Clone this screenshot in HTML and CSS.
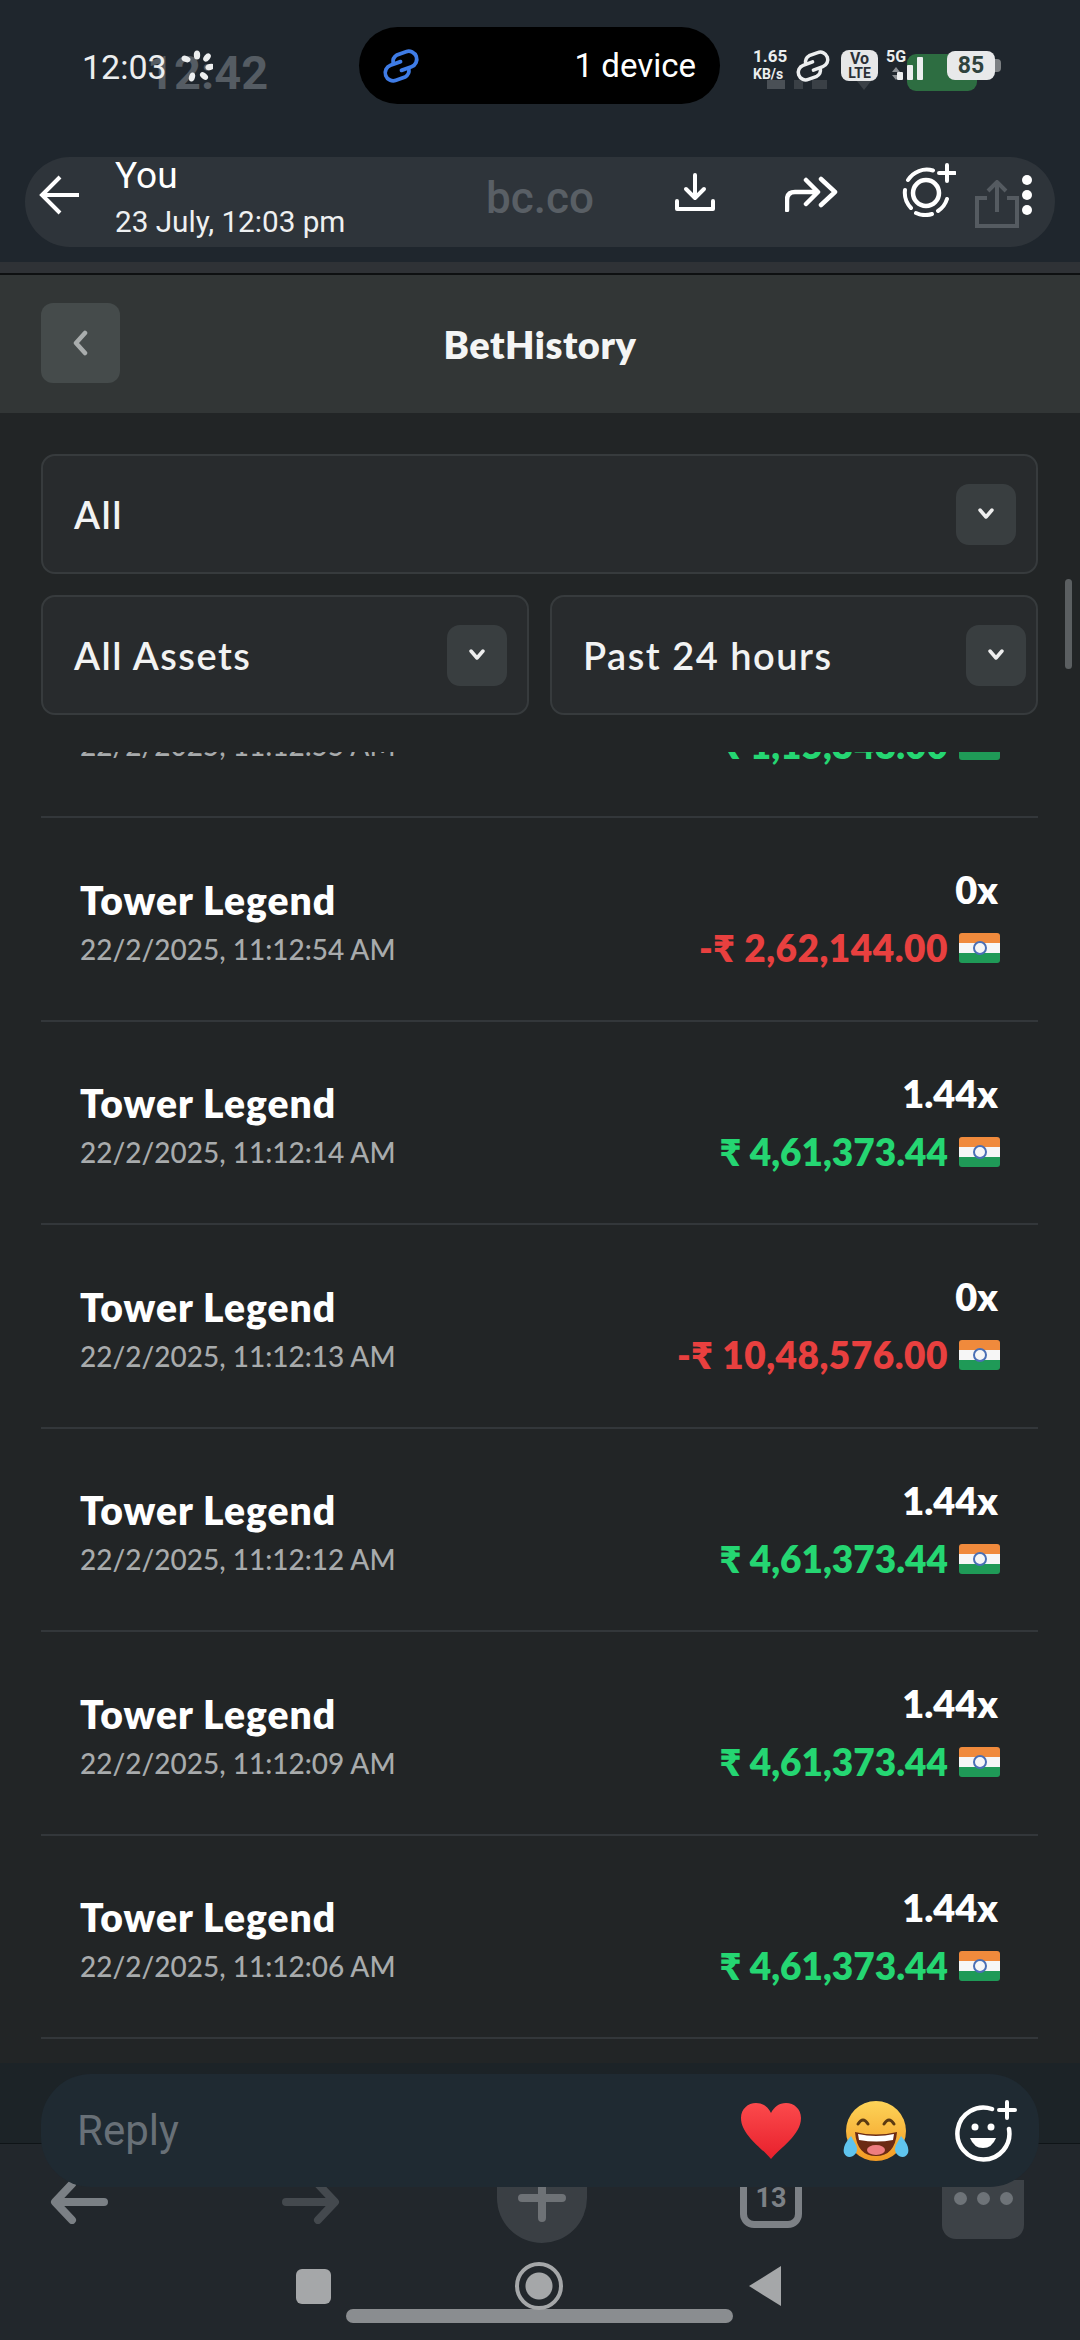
FILE: index.html
```html
<!DOCTYPE html>
<html>
<head>
  <meta charset="UTF-8">
  <title>BetHistory</title>
  <link rel="stylesheet" href="styles.css">
</head>
<body>
<div class="phone">

  <!-- Status bar + story header -->
  <div class="top">
    <div class="ghost-status">
      <span class="ghost-clock">12:42</span>
      <span class="ghost-bars"></span>
      <svg class="ghost-wifi" width="30" height="14" viewBox="0 0 30 14"><path d="M4 0h22L15 14z" fill="#3a4046"/></svg>
      <span class="ghost-batt"></span>
    </div>
    <div class="status">
      <div class="status-left">
        <span class="clock">12:03</span>
        <svg class="spinner" width="32" height="32" viewBox="0 0 32 32" fill="#eceeef">
          <ellipse cx="16" cy="5" rx="3.2" ry="4.6"/>
          <ellipse cx="26" cy="7.500" rx="3" ry="4.600" transform="rotate(40 26 7.500)"/>
          <ellipse cx="29" cy="17" rx="3" ry="4.600" transform="rotate(75 29 17)"/>
          <ellipse cx="23" cy="26" rx="3" ry="4.600" transform="rotate(-50 23 26)"/>
          <ellipse cx="11" cy="27" rx="3" ry="4.600" transform="rotate(15 11 27)"/>
          <ellipse cx="5" cy="9" rx="3" ry="4.600" transform="rotate(-70 5 9)"/>
        </svg>
      </div>
      <div class="island">
        <svg class="link" width="42" height="32" viewBox="0 0 36 30" fill="none" stroke="#3f7ce6" stroke-width="3.500" stroke-linecap="round">
          <g transform="rotate(-20 18 15)">
            <path d="M12 10a7.500 7.500 0 0 1 6-6h9a7.500 7.500 0 0 1 0 15H17"/>
            <path d="M24 20a7.500 7.500 0 0 1-6 6H9a7.500 7.500 0 0 1 0-15h10"/>
          </g>
        </svg>
        <span>1 device</span>
      </div>
      <div class="status-right">
        <div class="speed"><b>1.65</b><i>KB/s</i></div>
        <svg class="link" width="36" height="30" viewBox="0 0 36 30" fill="none" stroke="#eceeef" stroke-width="3.500" stroke-linecap="round">
          <g transform="rotate(-20 18 15)">
            <path d="M12 10a7.500 7.500 0 0 1 6-6h9a7.500 7.500 0 0 1 0 15H17"/>
            <path d="M24 20a7.500 7.500 0 0 1-6 6H9a7.500 7.500 0 0 1 0-15h10"/>
          </g>
        </svg>
        <div class="volte"><span>Vo</span><span class="lte">LTE</span></div>
        <div class="signal">
          <div class="five-g"><b>5G</b><svg width="10" height="13" viewBox="0 0 10 13" fill="#8b8f93"><path d="M5 0l4 5H1zM5 13L1 8h8z"/></svg></div>
          <div class="bars"><i class="b1"></i><i class="b2"></i><i class="b3"></i></div>
        </div>
        <div class="battery">85</div>
      </div>
    </div>

    <div class="story-bar">
      <svg class="story-back" width="42" height="40" viewBox="0 0 42 40" fill="none" stroke="#fff" stroke-width="4"><path d="M40 20H3M21 2L3 20l18 18"/></svg>
      <div class="story-who">
        <div class="story-name">You</div>
        <div class="story-date">23 July, 12:03 pm</div>
      </div>
      <span class="ghost-url">bc.co</span>
      <svg class="ic-download" width="40" height="40" viewBox="0 0 40 40" fill="none" stroke="#fff" stroke-width="4" stroke-linecap="round" stroke-linejoin="round"><path d="M20 2v22M11 16l9 9 9-9M2 28v8h36v-8"/></svg>
      <svg class="ic-forward" width="54" height="36" viewBox="0 0 54 36" fill="none" stroke="#fff" stroke-width="4.500" stroke-linecap="round" stroke-linejoin="round"><path d="M2 34V24q0-8 8-8h18M21 4l12 12-12 12M36 3l14 13-14 13"/></svg>
      <svg class="ic-add" width="54" height="54" viewBox="0 0 54 54" fill="none" stroke="#fff" stroke-width="4" stroke-linecap="round"><circle cx="24" cy="30" r="13" stroke-width="4.500"/><path d="M31 7.500A22 22 0 0 0 6 17M3 27a22 22 0 0 0 6 18M14 50a22 22 0 0 0 16 1M36 48a22 22 0 0 0 9-12"/><path d="M45 2v16M37 10h16"/></svg>
      <svg class="ghost-share" width="44" height="48" viewBox="0 0 44 48" fill="none" stroke="#555b61" stroke-width="4"><path d="M12 18H2v28h40V18H32M22 32V3M13 11l9-9 9 9"/></svg>
      <div class="dots"><i></i><i></i><i></i></div>
    </div>
  </div>

  <div class="band"></div>

  <div class="app-head">
    <button class="head-back"><svg width="18" height="26" viewBox="0 0 18 26" fill="none" stroke="#a9adad" stroke-width="4.500" stroke-linecap="round" stroke-linejoin="round"><path d="M13 3L4 13l9 10"/></svg></button>
    <h1>BetHistory</h1>
  </div>

  <div class="page">
    <div class="scrollbar"></div>
    <div class="filters">
      <div class="select"><span>All</span><em><svg width="18" height="12" viewBox="0 0 18 12" fill="none" stroke="#eee" stroke-width="3.500" stroke-linecap="round" stroke-linejoin="round"><path d="M3 2l6 7 6-7"/></svg></em></div>
      <div class="filter-row">
        <div class="select"><span>All Assets</span><em><svg width="18" height="12" viewBox="0 0 18 12" fill="none" stroke="#eee" stroke-width="3.500" stroke-linecap="round" stroke-linejoin="round"><path d="M3 2l6 7 6-7"/></svg></em></div>
        <div class="select select-wide"><span>Past 24 hours</span><em><svg width="18" height="12" viewBox="0 0 18 12" fill="none" stroke="#eee" stroke-width="3.500" stroke-linecap="round" stroke-linejoin="round"><path d="M3 2l6 7 6-7"/></svg></em></div>
      </div>
    </div>

    <div class="list">
      <div class="rows">
        <div class="row">
          <div class="row-left"><div class="game">Tower Legend</div><div class="time">22/2/2025, 11:12:55 AM</div></div>
          <div class="row-right"><div class="mult">1.44x</div><div class="amount win">₹ 1,15,343.00<span class="flag"></span></div></div>
        </div>
        <div class="row">
          <div class="row-left"><div class="game">Tower Legend</div><div class="time">22/2/2025, 11:12:54 AM</div></div>
          <div class="row-right"><div class="mult">0x</div><div class="amount loss">-₹ 2,62,144.00<span class="flag"></span></div></div>
        </div>
        <div class="row">
          <div class="row-left"><div class="game">Tower Legend</div><div class="time">22/2/2025, 11:12:14 AM</div></div>
          <div class="row-right"><div class="mult">1.44x</div><div class="amount win">₹ 4,61,373.44<span class="flag"></span></div></div>
        </div>
        <div class="row">
          <div class="row-left"><div class="game">Tower Legend</div><div class="time">22/2/2025, 11:12:13 AM</div></div>
          <div class="row-right"><div class="mult">0x</div><div class="amount loss">-₹ 10,48,576.00<span class="flag"></span></div></div>
        </div>
        <div class="row">
          <div class="row-left"><div class="game">Tower Legend</div><div class="time">22/2/2025, 11:12:12 AM</div></div>
          <div class="row-right"><div class="mult">1.44x</div><div class="amount win">₹ 4,61,373.44<span class="flag"></span></div></div>
        </div>
        <div class="row">
          <div class="row-left"><div class="game">Tower Legend</div><div class="time">22/2/2025, 11:12:09 AM</div></div>
          <div class="row-right"><div class="mult">1.44x</div><div class="amount win">₹ 4,61,373.44<span class="flag"></span></div></div>
        </div>
        <div class="row">
          <div class="row-left"><div class="game">Tower Legend</div><div class="time">22/2/2025, 11:12:06 AM</div></div>
          <div class="row-right"><div class="mult">1.44x</div><div class="amount win">₹ 4,61,373.44<span class="flag"></span></div></div>
        </div>
      </div>
    </div>
  </div>

  <!-- Reply box and nav -->
  <div class="foot">
    <div class="ghost-nav">
      <svg class="ghost-prev" width="58" height="44" viewBox="0 0 58 44" fill="none" stroke="#7b8085" stroke-width="8" stroke-linecap="round" stroke-linejoin="round"><path d="M54 22H6M22 4L5 22l17 18"/></svg>
      <svg class="ghost-next" width="58" height="44" viewBox="0 0 58 44" fill="none" stroke="#44494e" stroke-width="8" stroke-linecap="round" stroke-linejoin="round"><path d="M4 22h48M36 4l17 18-17 18"/></svg>
      <div class="ghost-plus"><svg width="48" height="48" viewBox="0 0 48 48" fill="none" stroke="#6e7276" stroke-width="8" stroke-linecap="round"><path d="M24 4v40M4 24h40"/></svg></div>
      <div class="ghost-tabs">13</div>
      <div class="ghost-more"><i></i><i></i><i></i></div>
    </div>

    <div class="reply">
      <span class="reply-text">Reply</span>
      <div class="reacts">
        <svg class="react-heart" width="62" height="58" viewBox="0 0 62 58">
          <defs><linearGradient id="heart" x1="0" y1="0" x2="0" y2="1"><stop offset="0" stop-color="#fb4a4c"/><stop offset="1" stop-color="#e8202c"/></linearGradient></defs>
          <path d="M31 57C22 46 1 33 1 16 1 7 8 1 16 1c7 0 12 4 15 10C34 5 39 1 46 1c8 0 15 6 15 15 0 17-21 30-30 41z" fill="url(#heart)"/>
        </svg>
        <svg class="react-laugh" width="66" height="64" viewBox="0 0 66 64">
          <defs><linearGradient id="face" x1="0" y1="0" x2="0" y2="1"><stop offset="0" stop-color="#fdd458"/><stop offset="1" stop-color="#f29a24"/></linearGradient></defs>
          <circle cx="33" cy="32" r="30" fill="url(#face)"/>
          <path d="M15 25q5-8 10 0M41 25q5-8 10 0" stroke="#5b3a12" stroke-width="3" fill="none" stroke-linecap="round"/>
          <path d="M12 33q21 5 42 0q-2 24-21 24T12 33z" fill="#6b2a13"/>
          <path d="M15 35q18 4 36 0l-1 6q-16 3-34 0z" fill="#fff"/>
          <ellipse cx="33" cy="51" rx="9" ry="5" fill="#ee7d80"/>
          <path d="M8 37q-9 10-7 17q3 6 9 3q6-4 3-11z" fill="#5fc4ee"/>
          <path d="M58 37q9 10 7 17q-3 6-9 3q-6-4-3-11z" fill="#5fc4ee"/>
        </svg>
        <svg class="react-add" width="62" height="62" viewBox="0 0 62 62" fill="none" stroke="#fff" stroke-width="4.500" stroke-linecap="round"><path d="M37 9A26 26 0 1 0 54 29"/><circle cx="20" cy="27" r="3.500" fill="#fff" stroke="none"/><circle cx="36" cy="27" r="3.500" fill="#fff" stroke="none"/><path d="M15 38h26q-4 10-13 10t-13-10z" fill="#fff" stroke="none"/><path d="M52 2v16M44 10h16" stroke-width="4"/></svg>
      </div>
    </div>

    <div class="sys-nav">
      <i class="nav-square"></i>
      <i class="nav-circle"></i>
      <i class="nav-back"></i>
    </div>
    <div class="home-bar"></div>
  </div>

</div>
</body>
</html>
```

FILE: styles.css
```css
* {
  box-sizing: border-box;
}

body {
  margin: 0;
  background: #222526;
  font-family: Roboto, sans-serif;
}

.phone {
  width: 1080px;
  height: 2340px;
  display: flex;
  flex-direction: column;
  position: relative;
  overflow: hidden;
}

/* Top: status bar and story header */
.top {
  height: 262px;
  background: #1f262d;
  padding: 27px 25px 0;
  position: relative;
}

.ghost-status {
  position: absolute;
  top: 0;
  left: 0;
  width: 100%;
  height: 100px;
}

.ghost-clock {
  position: absolute;
  left: 147px;
  top: 45px;
  font: 700 47px Roboto, sans-serif;
  color: #555c63;
}

.ghost-bars {
  position: absolute;
  left: 767px;
  top: 80px;
  width: 60px;
  height: 9px;
  background: linear-gradient(90deg, #4a5056 0 30%, transparent 30% 45%, #3a4046 45% 60%, transparent 60% 75%, #3a4046 75%);
}

.ghost-wifi {
  position: absolute;
  left: 849px;
  top: 76px;
}

.ghost-batt {
  position: absolute;
  left: 907px;
  top: 54px;
  width: 70px;
  height: 37px;
  background: #2d6d41;
  border-radius: 9px;
}

.status {
  display: flex;
  align-items: center;
  height: 77px;
  position: relative;
}

.status-left {
  width: 334px;
  padding-left: 57px;
  display: flex;
  align-items: center;
  gap: 14px;
  margin-top: 2px;
}

.clock {
  font-size: 34px;
  color: #eceeef;
}

.spinner {
  margin-top: -2px;
}

.island {
  width: 361px;
  height: 77px;
  background: #000;
  border-radius: 39px;
  display: flex;
  align-items: center;
  justify-content: space-between;
  padding: 0 24px 0 21px;
  color: #fff;
  font-size: 33px;
}

.link {
  overflow: visible;
}

.status-right {
  margin-left: 33px;
  display: flex;
  align-items: center;
  height: 40px;
  color: #eceeef;
}

.speed {
  width: 42px;
  display: flex;
  flex-direction: column;
  line-height: 17px;
}

.speed b {
  font-size: 17px;
}

.speed i {
  font-size: 14px;
  font-style: normal;
  font-weight: 700;
  margin-top: 1px;
}

.volte {
  width: 37px;
  height: 31px;
  margin-left: 10px;
  background: #e6e7e8;
  color: #2b3036;
  border-radius: 8px;
  display: flex;
  flex-direction: column;
  align-items: center;
  font-size: 16px;
  font-weight: 700;
  line-height: 14px;
  padding-top: 2px;
}

.volte .lte {
  font-size: 14px;
}

.signal {
  position: relative;
  width: 69px;
  height: 31px;
  margin-left: 7px;
}

.five-g {
  width: 22px;
  display: flex;
  flex-direction: column;
  align-items: center;
  gap: 4px;
}

.five-g b {
  font-size: 16px;
  line-height: 13px;
}

.bars i {
  position: absolute;
  bottom: 1px;
  width: 6px;
  background: #eceeef;
  border-radius: 1px;
}

.bars .b1 { left: 12px; height: 8px; }
.bars .b2 { left: 22px; height: 15px; }
.bars .b3 { left: 32px; height: 23px; }

.battery {
  width: 48px;
  height: 29px;
  background: #e8e9ea;
  border-radius: 8px;
  margin-left: -7px;
  position: relative;
  text-align: center;
  color: #2f423d;
  font-size: 23px;
  font-weight: 700;
  line-height: 29px;
}

.battery::after {
  content: "";
  position: absolute;
  right: -6px;
  top: 8px;
  width: 6px;
  height: 13px;
  background: #7c8083;
  border-radius: 0 4px 4px 0;
}

.story-bar {
  position: relative;
  margin-top: 53px;
  height: 90px;
  background: #2e343a;
  border-radius: 45px;
  display: flex;
  align-items: flex-start;
}

.story-back {
  margin: 18px 0 0 14px;
}

.story-who {
  margin-left: 34px;
  color: #fff;
  margin-top: -4px;
  width: 371px;
}

.story-name {
  font-size: 37px;
  line-height: 46px;
}

.story-date {
  font-size: 29.700px;
  line-height: 34px;
  margin-top: 6px;
  color: #eef0f1;
}

.ghost-url {
  position: absolute;
  left: 461px;
  top: 15px;
  font: 500 44px Roboto, sans-serif;
  color: #595f65;
}

.ic-download {
  margin: 16px 0 0 189px;
}

.ic-forward {
  margin: 19px 0 0 70px;
}

.ic-add {
  margin: 6px 0 0 63px;
}

.ghost-share {
  position: absolute;
  left: 950px;
  top: 23px;
}

.dots {
  position: absolute;
  left: 997px;
  top: 18px;
  display: flex;
  flex-direction: column;
  gap: 5px;
}

.dots i {
  width: 10px;
  height: 10px;
  border-radius: 50%;
  background: #fff;
}

.band {
  height: 13px;
  background: #2f3236;
  border-bottom: 2px solid #0e1011;
}

/* App header */
.app-head {
  height: 138px;
  background: #323636;
  padding: 28px 41px 0;
  position: relative;
}

.head-back {
  width: 79px;
  height: 80px;
  border: 0;
  padding: 0;
  background: #454b4b;
  border-radius: 12px;
  display: flex;
  align-items: center;
  justify-content: center;
}

.app-head h1 {
  position: absolute;
  left: 0;
  right: 0;
  top: 46px;
  margin: 0;
  text-align: center;
  color: #f4f5f5;
  font: 800 38px/46px Lato, sans-serif;
  letter-spacing: .5px;
}

/* Page */
.page {
  height: 1650px;
  background: #222526;
  padding: 41px 42px 0 41px;
  position: relative;
  display: flex;
  flex-direction: column;
}

.scrollbar {
  position: absolute;
  left: 1065px;
  top: 166px;
  width: 7px;
  height: 90px;
  background: #5b5f61;
  border-radius: 4px;
}

.filters {
  display: flex;
  flex-direction: column;
  gap: 21px;
}

.filter-row {
  display: grid;
  grid-template-columns: 1fr 1fr;
  gap: 21px;
}

.select {
  height: 120px;
  background: #282b2d;
  border: 2px solid #373b3d;
  border-radius: 14px;
  padding: 0 20px 0 31px;
  display: flex;
  align-items: center;
  justify-content: space-between;
  color: #f2f3f3;
  font: 600 38px Lato, sans-serif;
  letter-spacing: 1.500px;
}

.select-wide {
  padding-right: 10px;
}

.select em {
  width: 60px;
  height: 61px;
  background: #393e40;
  border-radius: 13px;
  display: flex;
  align-items: center;
  justify-content: center;
}

.list {
  margin-top: 37px;
  flex: 1;
  overflow: hidden;
}

.rows {
  margin-top: -137.5px;
}

.row {
  height: 203.5px;
  border-bottom: 2px solid #33373a;
  padding: 0 38px 0 39px;
  display: flex;
  align-items: center;
  justify-content: space-between;
}

.row-left {
  padding-top: 6px;
}

.game {
  color: #fff;
  font: 800 39px/44px Lato, sans-serif;
  letter-spacing: 1px;
}

.time {
  color: #a8abac;
  font: 500 28px/34px Lato, sans-serif;
  margin-top: 10px;
}

.row-right {
  display: flex;
  flex-direction: column;
  align-items: flex-end;
}

.mult {
  color: #fff;
  font: 800 38px/44px Lato, sans-serif;
  margin-right: 2px;
}

.amount {
  display: flex;
  align-items: center;
  font: 800 37px/44px Lato, "Noto Sans", sans-serif;
  margin-top: 15px;
}

.win {
  color: #25d672;
}

.loss {
  color: #e8403f;
  letter-spacing: .5px;
}

.flag {
  width: 41px;
  height: 30px;
  margin-left: 11px;
  border-radius: 3px;
  background: linear-gradient(#f08a3c 33%, #f6f6f6 33% 66%, #1f9a57 66%);
  display: flex;
  align-items: center;
  justify-content: center;
}

.flag::after {
  content: "";
  width: 10px;
  height: 10px;
  border: 2px solid #4a6fb5;
  border-radius: 50%;
}

/* Bottom */
.foot {
  flex: 1;
  position: relative;
  padding-top: 11px;
  background: linear-gradient(#1c2327 80px, #0f1417 80px 81px, #22272c 81px);
}

/* blurred nav of the page behind, sits under the reply box */
.ghost-nav {
  position: absolute;
  top: 117px;
  left: 50px;
  display: flex;
  align-items: flex-start;
}

.ghost-next {
  margin-left: 174px;
}

.ghost-plus {
  width: 90px;
  height: 63px;
  margin-left: 157px;
  background: #3a3f44;
  border-radius: 0 0 45px 45px;
  display: flex;
  justify-content: center;
  overflow: hidden;
}

.ghost-plus svg {
  margin-top: -6px;
}

.ghost-tabs {
  width: 62px;
  height: 48px;
  margin-left: 153px;
  border: 7px solid #7d8186;
  border-top: 0;
  border-radius: 0 0 14px 14px;
  text-align: center;
  color: #7d8186;
  font: 700 27px/36px Roboto, sans-serif;
}

.ghost-more {
  width: 82px;
  height: 59px;
  margin-left: 140px;
  background: #3d4247;
  border-radius: 0 0 14px 14px;
  display: flex;
  justify-content: center;
  gap: 10px;
  padding-top: 12px;
}

.ghost-more i {
  width: 13px;
  height: 13px;
  border-radius: 50%;
  background: #6e7378;
}

.reply {
  position: relative;
  margin: 0 41px;
  height: 113px;
  background: #1f2a32;
  border-radius: 50px;
  display: flex;
  align-items: center;
  justify-content: space-between;
  padding: 0 22px 0 36px;
}

.reply-text {
  color: #687077;
  font-size: 42px;
}

.reacts {
  display: flex;
  align-items: center;
}

.react-laugh {
  margin-left: 41px;
}

.react-add {
  margin-left: 46px;
}

.sys-nav {
  margin-top: 79px;
  height: 40px;
  position: relative;
  display: flex;
  align-items: center;
  padding-left: 296px;
}

.nav-square {
  width: 35px;
  height: 35px;
  background: #a5a7a9;
  border-radius: 6px;
}

.nav-circle {
  width: 48px;
  height: 48px;
  margin-left: 184px;
  border: 4px solid #a5a7a9;
  border-radius: 50%;
  background: radial-gradient(#a5a7a9 0 13px, transparent 14px);
}

.nav-back {
  margin-left: 186px;
  width: 0;
  height: 0;
  border-top: 20px solid transparent;
  border-bottom: 20px solid transparent;
  border-right: 32px solid #a5a7a9;
}

.home-bar {
  width: 387px;
  height: 14px;
  margin: 3px 0 0 346px;
  background: #8a8d90;
  border-radius: 7px;
}
```
